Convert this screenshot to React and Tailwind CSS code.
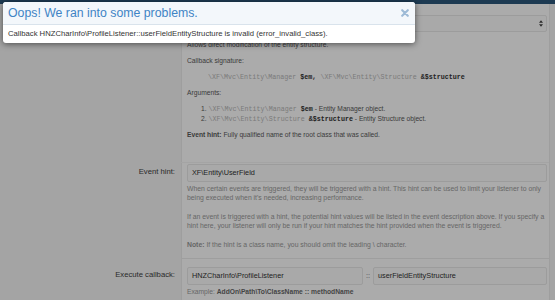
import React from 'react'

const sans = { fontFamily: '"Liberation Sans", Arial, sans-serif' }

function Cls({ children }) {
  return <span className="text-[#7a7a7a]">{children}</span>
}

function Var({ children }) {
  return <span className="font-bold text-[#222]">{children}</span>
}

function Row({ label, children, className = '' }) {
  return (
    <div className={`grid grid-cols-[181px_1fr] ${className}`}>
      <div className="pr-[6px] text-right text-[7.7px] leading-[18px] text-[#2a2a2a]">
        {label}
      </div>
      <div className="border-l border-[#9e9e9e] bg-[#ababab] pl-[5px] pr-[2px]">
        {children}
      </div>
    </div>
  )
}

function Input({ value }) {
  return (
    <div className="flex h-[18px] items-center rounded-[2px] border border-[#9c9c9c] bg-[#a9a9a9] px-[4px] text-[7.3px] text-[#222]">
      {value}
    </div>
  )
}

function ErrorOverlay() {
  return (
    <div className="absolute left-[3px] top-[2px] w-[412px] overflow-hidden rounded-[3px] bg-white shadow-[0_1px_6px_rgba(0,0,0,0.55)]">
      <div className="flex h-[23px] items-center justify-between border-b border-[#d9e3ec] bg-[#f3f7fb] pl-[5px] pr-[6px]">
        <span className="text-[12.3px] text-[#3f84c5]">Oops! We ran into some problems.</span>
        <svg viewBox="0 0 10 10" className="h-[8px] w-[8px]" aria-hidden="true">
          <path d="M1.5 1.5 L8.5 8.5 M8.5 1.5 L1.5 8.5" stroke="#9dbad6" strokeWidth="2.6" strokeLinecap="round" />
        </svg>
      </div>
      <div className="flex h-[18px] items-center pl-[5px] text-[7.7px] text-[#333]">
        Callback HNZCharInfo\ProfileListener::userFieldEntityStructure is invalid (error_invalid_class).
      </div>
    </div>
  )
}

export default function App() {
  return (
    <div className="relative h-[300px] w-[555px] overflow-hidden bg-[#a4a4a4]" style={sans}>
      <div className="h-[4px] bg-[#1d3a52]" />

      <div className="w-[550px] border-r border-[#9e9e9e]">
        <Row label="">
          <div className="pt-[11px]">
            <div className="flex h-[17px] items-center justify-end rounded-[2px] border border-[#9c9c9c] bg-[#a9a9a9] pr-[3px]">
              <svg viewBox="0 0 6 10" className="h-[7px] w-[4px]" aria-hidden="true">
                <path d="M3 0 L6 4 L0 4 Z M3 10 L6 6 L0 6 Z" fill="#2a2a2a" />
              </svg>
            </div>
          </div>
          <div className="text-[6.7px] leading-[10px] text-[#3a3a3a]">
            <p className="mt-[8px]">Allows direct modification of the entity structure.</p>
            <p className="mt-[6px]">Callback signature:</p>
            <p className="mt-[6px] pl-[21px] font-['Liberation_Mono',monospace] text-[6.7px]">
              <Cls>\XF\Mvc\Entity\Manager</Cls> <Var>$em,</Var> <Cls>\XF\Mvc\Entity\Structure</Cls>{' '}
              <Var>&amp;$structure</Var>
            </p>
            <p className="mt-[6px]">Arguments:</p>
            <div className="mt-[6px] pl-[14px]">
              <p>
                1.{' '}
                <span className="font-['Liberation_Mono',monospace]">
                  <Cls>\XF\Mvc\Entity\Manager</Cls> <Var>$em</Var>
                </span>{' '}
                - Entity Manager object.
              </p>
              <p>
                2.{' '}
                <span className="font-['Liberation_Mono',monospace]">
                  <Cls>\XF\Mvc\Entity\Structure</Cls> <Var>&amp;$structure</Var>
                </span>{' '}
                - Entity Structure object.
              </p>
            </div>
            <p className="mt-[6px] pb-[22px]">
              <span className="font-bold">Event hint:</span> Fully qualified name of the root class that was called.
            </p>
          </div>
        </Row>

        <Row label="Event hint:" className="pt-[1px]">
          <div className="pt-[1px]">
            <Input value="XF\Entity\UserField" />
          </div>
          <div className="pb-[9px] text-[6.85px] leading-[8.6px] text-[#666]">
            <p className="mt-[3px]">
              When certain events are triggered, they will be triggered with a hint. This hint can be used to limit your listener to only
              being executed when it's needed, increasing performance.
            </p>
            <p className="mt-[10.8px]">
              If an event is triggered with a hint, the potential hint values will be listed in the event description above. If you specify a
              hint here, your listener will only be run if your hint matches the hint provided when the event is triggered.
            </p>
            <p className="mt-[10.7px]">
              <span className="font-bold">Note:</span> If the hint is a class name, you should omit the leading \ character.
            </p>
          </div>
        </Row>

        <div className="grid grid-cols-[181px_1fr]">
          <div className="pr-[6px] pt-[8px] text-right text-[7.7px] leading-[18px] text-[#2a2a2a]">
            Execute callback:
          </div>
          <div className="border-l border-t border-[#9e9e9e] bg-[#ababab] pl-[5px] pr-[2px] pt-[8px]">
            <div className="flex items-center">
              <div className="w-[176px]">
                <Input value="HNZCharInfo\ProfileListener" />
              </div>
              <span className="w-[10px] text-center text-[7.3px] text-[#444]">::</span>
              <div className="flex-1">
                <Input value="userFieldEntityStructure" />
              </div>
            </div>
            <p className="mt-[3px] pb-[10px] text-[6.7px] leading-[8.6px] text-[#666]">
              Example: <span className="font-bold text-[#444]">AddOn\Path\To\ClassName :: methodName</span>
            </p>
          </div>
        </div>
      </div>

      <ErrorOverlay />
    </div>
  )
}
